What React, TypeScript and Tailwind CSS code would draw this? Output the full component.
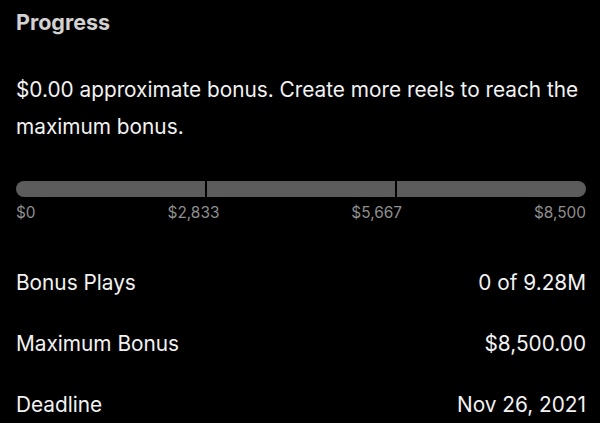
export default function App() {
  const rows = [
    ["Bonus Plays", "0 of 9.28M"],
    ["Maximum Bonus", "$8,500.00"],
    ["Deadline", "Nov 26, 2021"],
  ];
  return (
    <div
      className="w-[600px] h-[423px] overflow-hidden bg-black pl-4 pr-[14px] flex flex-col"
      style={{ fontFamily: "Inter, 'Liberation Sans', sans-serif" }}
    >
      <div className="shrink-0 mt-[8px] text-[21.5px] leading-[28px] font-bold text-[#d2d2d2]">Progress</div>
      <p className="shrink-0 mt-[35px] text-[20.8px] leading-[37px] text-[#f2f2f2]">
        $0.00 approximate bonus. Create more reels to reach the maximum bonus.
      </p>
      <div className="shrink-0 mt-[36px] h-4 rounded-full bg-[#5c5c5c] flex overflow-hidden">
        <div className="flex-1 border-r-2 border-black" />
        <div className="flex-1 border-r-2 border-black" />
        <div className="flex-1" />
      </div>
      <div className="shrink-0 mt-[7px] flex justify-between text-[15.4px] leading-[18px] text-[#8e8e8e]">
        <span>$0</span>
        <span>$2,833</span>
        <span>$5,667</span>
        <span>$8,500</span>
      </div>
      <div className="shrink-0 mt-[30px] flex flex-col">
        {rows.map(([l, v]) => (
          <div key={l} className="h-[61px] shrink-0 flex items-center justify-between text-[20.8px] text-[#f2f2f2]">
            <span>{l}</span>
            <span>{v}</span>
          </div>
        ))}
      </div>
    </div>
  );
}
